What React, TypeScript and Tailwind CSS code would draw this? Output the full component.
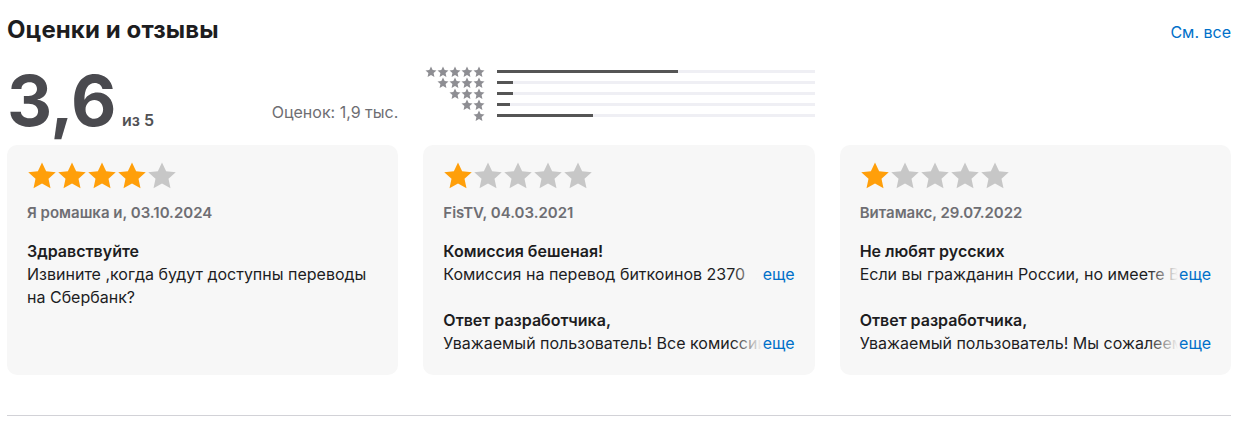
import React from "react";

type Review = {
    stars: number;
    author: string;
    date: string;
    title: string;
    body: string;
    clamp: boolean;
    reply?: string;
};

const reviews: Review[] = [
    {
        stars: 4,
        author: "Я ромашка и",
        date: "03.10.2024",
        title: "Здравствуйте",
        body: "Извините ,когда будут доступны переводы на Сбербанк?",
        clamp: false,
    },
    {
        stars: 1,
        author: "FisTV",
        date: "04.03.2021",
        title: "Комиссия бешеная!",
        body: "Комиссия на перевод биткоинов 2370 рублей это просто грабеж, пользоваться невозможно",
        clamp: true,
        reply: "Уважаемый пользователь! Все комиссии за перевод криптовалюты устанавливаются сетью",
    },
    {
        stars: 1,
        author: "Витамакс",
        date: "29.07.2022",
        title: "Не любят русских",
        body: "Если вы гражданин России, но имеете ВНЖ в другой стране, приложение не работает",
        clamp: true,
        reply: "Уважаемый пользователь! Мы сожалеем, что так получилось",
    },
];

const histogram = [57, 5, 5, 4, 30];

const STAR = "12 1.2 15.3 8.1 23 9.0 17.2 14.1 18.8 21.8 12 18.0 5.2 21.8 6.8 14.1 1 9.0 8.7 8.1";

function Star({ size, color }: { size: number; color: string }) {
    return (
        <svg width={size} height={size} viewBox="0 0 24 24" className="shrink-0">
            <polygon points={STAR} fill={color} />
        </svg>
    );
}

function ClampLine({ text }: { text: string }) {
    return (
        <div className="relative h-[23px] overflow-hidden">
            <p>{text}</p>
            <div className="absolute right-0 top-0 flex h-[23px]">
                <div className="w-[30px] bg-gradient-to-r from-[#f7f7f7]/0 to-[#f7f7f7]" />
                <button className="bg-[#f7f7f7] pl-[1px] text-[#0070c9]">еще</button>
            </div>
        </div>
    );
}

function ReviewCard({ review }: { review: Review }) {
    return (
        <div className="flex h-[230px] flex-col rounded-[10px] bg-[#f7f7f7] px-5 pt-[16px] text-[16px] leading-[23px] text-[#1d1d1f]">
            <div className="flex">
                {[0, 1, 2, 3, 4].map((i) => (
                    <Star key={i} size={30} color={i < review.stars ? "#ff9f0a" : "#c7c7c7"} />
                ))}
            </div>
            <p className="mt-[10px] text-[15px] font-semibold text-[#6e6e73]">
                {review.author}, {review.date}
            </p>
            <p className="mt-[16px] font-semibold">{review.title}</p>
            {review.clamp ? <ClampLine text={review.body} /> : <p>{review.body}</p>}
            {review.reply && (
                <div className="mt-[23px]">
                    <p className="font-semibold">Ответ разработчика,</p>
                    <ClampLine text={review.reply} />
                </div>
            )}
        </div>
    );
}

export default function App() {
    return (
        <div className="min-h-screen bg-white font-['Inter',sans-serif] antialiased">
            <section className="w-[1224px] ml-[7px] pt-[12px]">
                <div className="flex items-baseline justify-between">
                    <h2 className="text-[24px] font-bold tracking-[0.1px] text-[#1d1d1f]">Оценки и отзывы</h2>
                    <a href="#" className="text-[16px] text-[#0070c9]">См. все</a>
                </div>

                <div className="mt-[13px] grid grid-cols-3 gap-[25px]">
                    <div className="flex items-end justify-between">
                        <div className="flex items-baseline gap-[6px]">
                            <span className="text-[70px] font-bold leading-[80px] tracking-[-0.5px] text-[#4a4a4f]">3,6</span>
                            <span className="text-[16px] font-semibold text-[#515154]">из 5</span>
                        </div>
                        <span className="mb-[17px] text-[16px] text-[#6e6e73]">Оценок: 1,9 тыс.</span>
                    </div>

                    <div className="flex flex-col pt-[5px]">
                        {histogram.map((pct, row) => (
                            <div key={row} className="flex h-[11px] items-center gap-[12px]">
                                <div className="flex w-[62px] justify-end">
                                    {Array.from({ length: 5 - row }).map((_, i) => (
                                        <Star key={i} size={12} color="#8e8e93" />
                                    ))}
                                </div>
                                <div className="h-[3px] flex-1 bg-[#efeff4]">
                                    <div className="h-full bg-[#555555]" style={{ width: `${pct}%` }} />
                                </div>
                            </div>
                        ))}
                    </div>
                    <div />
                </div>

                <div className="mt-[4px] grid grid-cols-3 gap-[25px]">
                    {reviews.map((r) => (
                        <ReviewCard key={r.author} review={r} />
                    ))}
                </div>

                <div className="mt-[40px] h-px bg-[#d2d2d7]" />
            </section>
        </div>
    );
}
